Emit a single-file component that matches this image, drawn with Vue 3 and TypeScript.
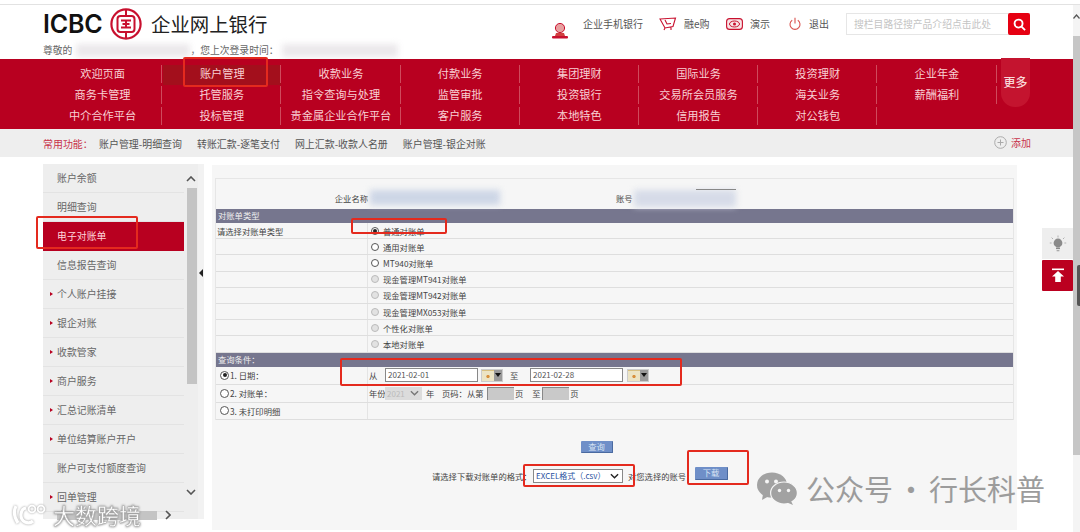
<script setup lang="ts">
const navRows: string[][] = [
  ['欢迎页面', '账户管理', '收款业务', '付款业务', '集团理财', '国际业务', '投资理财', '企业年金'],
  ['商务卡管理', '托管服务', '指令查询与处理', '监管审批', '投资银行', '交易所会员服务', '海关业务', '薪酬福利'],
  ['中介合作平台', '投标管理', '贵金属企业合作平台', '客户服务', '本地特色', '信用报告', '对公钱包', ''],
]
const navCells = navRows.flat().map((label, i) => ({ label, key: i }))
const quick = ['账户管理-明细查询', '转账汇款-逐笔支付', '网上汇款-收款人名册', '账户管理-银企对账']
const side = [
  { t: '账户余额' },
  { t: '明细查询' },
  { t: '电子对账单', active: true },
  { t: '信息报告查询' },
  { t: '个人账户挂接', arrow: true },
  { t: '银企对账', arrow: true },
  { t: '收款管家', arrow: true },
  { t: '商户服务', arrow: true },
  { t: '汇总记账清单', arrow: true },
  { t: '单位结算账户开户', arrow: true },
  { t: '账户可支付额度查询' },
  { t: '回单管理', arrow: true },
]
const types = [
  { t: '普通对账单', label: '请选择对账单类型', state: 'on' },
  { t: '通用对账单', label: '', state: 'off' },
  { t: 'MT940对账单', label: '', state: 'off' },
  { t: '现金管理MT941对账单', label: '', state: 'dis' },
  { t: '现金管理MT942对账单', label: '', state: 'dis' },
  { t: '现金管理MX053对账单', label: '', state: 'dis' },
  { t: '个性化对账单', label: '', state: 'dis' },
  { t: '本地对账单', label: '', state: 'dis' },
]
</script>

<template>
  <div class="page">
    <div class="strip"></div>
    <div class="wrap">
      <div class="content">
        <header class="head">
          <div class="brand">
            <div class="logo-row">
              <span class="icbc">ICBC</span>
              <svg class="coin" viewBox="0 0 32 32" width="32" height="32">
                <circle cx="16" cy="16" r="14.6" fill="none" stroke="#c8102e" stroke-width="2.2" />
                <rect x="7.5" y="8" width="17" height="16" rx="3" fill="none" stroke="#c8102e" stroke-width="2" />
                <path d="M16 2V8M16 24V30M11 12.4H21M11 19.6H21M16 12.4V19.6M12.5 16H19.5" fill="none" stroke="#c8102e" stroke-width="2" />
              </svg>
              <span class="title">企业网上银行</span>
            </div>
            <div class="greet">尊敬的<span class="gap-a"></span>，您上次登录时间：</div>
          </div>
          <div class="tools">
            <svg class="ti-bank" viewBox="0 0 18 16" width="18" height="16">
              <circle cx="9" cy="5" r="4.6" fill="#e8a0a0" stroke="#c8102e" stroke-width="1" />
              <path d="M5 10H13L14 13H4Z" fill="#d04040" />
              <rect x="1" y="13" width="16" height="2.6" rx="1" fill="#c8102e" />
            </svg>
            <span class="tt t-mobile">企业手机银行</span>
            <svg class="ti-cart" viewBox="0 0 18 14" width="18" height="14">
              <path d="M1 2 L16.5 1 L14 9.5 L6 11 Z M6 11 L5 13 M12 10 L12 13 M6 3 L8 7 L12 6.5" fill="none" stroke="#c8102e" stroke-width="1.1" />
            </svg>
            <span class="tt t-buy">融e购</span>
            <svg class="ti-eye" viewBox="0 0 17 12" width="17" height="12">
              <rect x="0.6" y="0.6" width="15.8" height="10.8" rx="3" fill="#f8e4e6" stroke="#c8102e" stroke-width="1.1" />
              <ellipse cx="8.5" cy="6" rx="5" ry="3" fill="none" stroke="#c8102e" stroke-width="1" />
              <circle cx="8.5" cy="6" r="1.5" fill="#c8102e" />
            </svg>
            <span class="tt t-demo">演示</span>
            <svg class="ti-power" viewBox="0 0 12 14" width="12" height="14">
              <path d="M3.2 3.2A5 5 0 1 0 8.8 3.2M6 0.8V6.5" fill="none" stroke="#d9534f" stroke-width="1.1" />
            </svg>
            <span class="tt t-exit">退出</span>
            <div class="search">
              <span class="ph">搜栏目路径搜产品介绍点击此处</span>
              <span class="search-btn">
                <svg viewBox="0 0 14 14" width="13" height="13">
                  <circle cx="6" cy="6" r="4.3" fill="none" stroke="#fff" stroke-width="2" />
                  <path d="M9.2 9.2L13 13" stroke="#fff" stroke-width="2" />
                </svg>
              </span>
            </div>
          </div>
          <div class="blur b-name"></div>
          <div class="blur b-time"></div>
        </header>

        <nav class="nav">
          <div class="nav-grid">
            <a v-for="c in navCells" :key="c.key" class="nav-cell" :class="{ 'nav-empty': !c.label, 'nav-cur': c.key === 1 }">{{ c.label }}</a>
          </div>
          <div class="more">更多</div>
          <div class="mark m-nav"></div>
        </nav>

        <div class="quick">
          <span class="quick-t">常用功能：</span>
          <a v-for="q in quick" :key="q" class="quick-i">{{ q }}</a>
          <span class="add">
            <svg viewBox="0 0 13 13" width="13" height="13">
              <circle cx="6.5" cy="6.5" r="5.8" fill="none" stroke="#aaa" />
              <path d="M3.5 6.5H9.5M6.5 3.5V9.5" stroke="#aaa" />
            </svg>
            <span>添加</span>
          </span>
        </div>

        <div class="body">
          <aside class="side">
            <div class="side-list">
              <div v-for="s in side" :key="s.t" class="side-i" :class="{ active: s.active }">
                <i v-if="s.arrow" class="tri"></i>{{ s.t }}
              </div>
              <div class="hbar">
                <svg class="ha" viewBox="0 0 6 10" width="6" height="10"><path d="M5 1L1 5L5 9" fill="none" stroke="#555" stroke-width="1.6" /></svg>
                <span class="hthumb"></span>
                <svg class="ha" viewBox="0 0 6 10" width="6" height="10"><path d="M1 1L5 5L1 9" fill="none" stroke="#555" stroke-width="1.6" /></svg>
              </div>
            </div>
            <div class="vbar">
              <svg viewBox="0 0 10 6" width="10" height="6"><path d="M1 5L5 1L9 5" fill="none" stroke="#555" stroke-width="1.6" /></svg>
              <span class="vthumb"></span>
              <svg viewBox="0 0 10 6" width="10" height="6"><path d="M1 1L5 5L9 1" fill="none" stroke="#555" stroke-width="1.6" /></svg>
            </div>
            <div class="dots"><i class="dots-tri"></i></div>
            <div class="mark m-side"></div>
            <div class="wm-side">
              <svg viewBox="0 0 36 22" width="36" height="22">
                <path d="M4 3C1.5 8 2 14 6 20M14 5C8 6 7 16 13 19C16 20.5 19 20 21 18" fill="none" stroke="#fff" stroke-width="3.2" />
                <circle cx="20" cy="6" r="3.4" fill="none" stroke="#fff" stroke-width="1.8" />
                <circle cx="29" cy="6" r="3.4" fill="none" stroke="#fff" stroke-width="1.8" />
              </svg>
              <span>大数跨境</span>
            </div>
          </aside>

          <main class="panel">
            <div class="table">
              <div class="row r-company">
                <div class="c-l right">企业名称</div>
                <div class="c-r"><span class="acct">账号</span></div>
                <div class="blur b-co"></div>
                <div class="blur b-acct"></div>
                <span class="acct-edge"></span>
              </div>
              <div class="band">对账单类型</div>
              <div v-for="ty in types" :key="ty.t" class="row r-type">
                <div class="c-l">{{ ty.label }}</div>
                <div class="c-r">
                  <i class="radio" :class="ty.state"></i><span>{{ ty.t }}</span>
                </div>
              </div>
              <div class="band">查询条件：</div>
              <div class="row r-q">
                <div class="c-l"><i class="radio on big"></i>1. 日期：</div>
                <div class="c-r">
                  <span class="from">从</span>
                  <span class="inp">2021-02-01</span>
                  <span class="cal"><i class="cal-g"></i><i class="cal-a"></i></span>
                  <span class="to">至</span>
                  <span class="inp">2021-02-28</span>
                  <span class="cal cal2"><i class="cal-g"></i><i class="cal-a"></i></span>
                </div>
              </div>
              <div class="row r-q">
                <div class="c-l"><i class="radio off big"></i>2. 对账单：</div>
                <div class="c-r">
                  <span class="from">年份</span>
                  <span class="sel-dis">2021
                    <svg viewBox="0 0 10 6" width="9" height="6"><path d="M1 1L5 5L9 1" fill="none" stroke="#777" stroke-width="1.5" /></svg>
                  </span>
                  <span class="y">年</span>
                  <span class="pg">页码：从第</span>
                  <span class="inp-dis"></span>
                  <span>页</span>
                  <span class="t2">至</span>
                  <span class="inp-dis"></span>
                  <span>页</span>
                </div>
              </div>
              <div class="row r-q">
                <div class="c-l"><i class="radio off big"></i>3. 未打印明细</div>
                <div class="c-r"></div>
              </div>
            </div>

            <div class="q-row"><span class="btn">查询</span></div>
            <div class="f-row">
              <span>请选择下载对账单的格式：</span>
              <span class="fsel">
                <span>EXCEL格式（.csv）</span>
                <svg viewBox="0 0 10 6" width="9" height="6"><path d="M1 1L5 5L9 1" fill="none" stroke="#222" stroke-width="1.5" /></svg>
              </span>
              <span class="f-acc">对您选择的账号：</span>
              <span class="btn btn-d">下载</span>
            </div>

            <div class="mark m-type"></div>
            <div class="mark m-date"></div>
            <div class="mark m-fmt"></div>
            <div class="mark m-dl"></div>
          </main>

          <div class="rail">
            <div class="lamp">
              <svg viewBox="0 0 18 18" width="18" height="18">
                <circle cx="9" cy="8" r="4.4" fill="#8a8a8a" />
                <rect x="7" y="12.5" width="4" height="1.6" fill="#8a8a8a" />
                <rect x="7.6" y="15" width="2.8" height="1.3" fill="#aaa" />
                <path d="M9 0.5V2.5M2.6 2.6L4 4M15.4 2.6L14 4M0.8 8H2.6M15.4 8H17.2" stroke="#aaa" stroke-width="0.9" />
              </svg>
            </div>
            <div class="totop">
              <svg viewBox="0 0 14 15" width="14" height="15">
                <rect x="1" y="0.5" width="12" height="1.6" fill="#fff" />
                <path d="M7 3L13 8.4H9.8V14H4.2V8.4H1Z" fill="#fff" />
              </svg>
            </div>
          </div>
        </div>
      </div>
      <div class="pagebar">
        <svg class="pb-up" viewBox="0 0 7 5" width="7" height="5"><path d="M0.5 4.5L3.5 1L6.5 4.5" fill="none" stroke="#555" stroke-width="1.2" /></svg>
        <span class="pb-thumb"><i class="pb-dark"></i></span>
      </div>
    </div>

    <div class="wm">
      <svg viewBox="0 0 40 33" width="40" height="33">
        <ellipse cx="15" cy="13" rx="15" ry="12.6" fill="#a2a2a2" />
        <path d="M6 22L5 28L12 24Z" fill="#a2a2a2" />
        <ellipse cx="27" cy="21" rx="13.4" ry="11" fill="#a2a2a2" stroke="#f6f6f6" stroke-width="1.2" />
        <path d="M34 29L36 33L29 30Z" fill="#a2a2a2" />
        <circle cx="10" cy="9.5" r="2" fill="#f6f6f6" />
        <circle cx="19" cy="9.5" r="2" fill="#f6f6f6" />
        <circle cx="22.5" cy="18.5" r="1.7" fill="#f6f6f6" />
        <circle cx="31.5" cy="18.5" r="1.7" fill="#f6f6f6" />
      </svg>
      <span class="wm-a">公众号</span>
      <span class="wm-dot">·</span>
      <span>行长科普</span>
    </div>
  </div>
</template>

<style>
html, body { margin: 0; background: #fff; }
</style>

<style scoped>
.page {
  position: relative;
  width: 1080px;
  height: 532px;
  overflow: hidden;
  background: #fff;
  font-family: "Noto Sans CJK SC", "Liberation Sans", sans-serif;
  color: #555;
}
.strip { height: 4px; border-bottom: 1px solid #e2e2e2; }
.wrap { display: flex; height: 527px; }
.content { width: 1073px; flex: none; display: flex; flex-direction: column; }

.head { position: relative; height: 54px; flex: none; display: flex; justify-content: space-between; padding: 0 43px; }
.logo-row { display: flex; align-items: center; height: 38px; }
.icbc { font: 600 25px Inter, "Liberation Sans", sans-serif; color: #111; letter-spacing: -0.2px; width: 59px; }
.coin { margin-left: 8px; }
.title { margin-left: 9px; font-size: 19.4px; color: #222; line-height: 38px; }
.greet { font-size: 9.8px; line-height: 14px; color: #666; }
.gap-a { display: inline-block; width: 118px; }
.tools { display: flex; align-items: center; height: 22px; margin-top: 8px; }
.tt { font-size: 10px; color: #555; white-space: nowrap; line-height: 22px; }
.ti-bank { margin-top: 13px; margin-right: 14px; margin-left: 2px; }
.t-mobile { width: 60px; margin-right: 16px; }
.ti-cart { margin-right: 7px; }
.t-buy { width: 25px; margin-right: 17px; }
.ti-eye { margin-right: 7px; }
.t-demo { width: 20px; margin-right: 19px; }
.ti-power { margin-right: 8px; }
.t-exit { width: 20px; margin-right: 17px; }
.search { display: flex; width: 184px; height: 22px; box-sizing: border-box; border: 1px solid #e6e6e6; border-right: 0; }
.ph { flex: 1; font-size: 9.8px; line-height: 20px; color: #c4c4c4; padding-left: 7px; white-space: nowrap; overflow: hidden; }
.search-btn { width: 22px; height: 22px; margin-top: -1px; background: #e60012; border-radius: 2px; display: flex; align-items: center; justify-content: center; }
.blur { position: absolute; filter: blur(3px); }
.b-name { left: 76px; top: 39px; width: 114px; height: 13px; background: #ebe8eb; }
.b-time { left: 282px; top: 39px; width: 116px; height: 13px; background: #ebe8eb; }

.nav { position: relative; height: 70px; flex: none; background: #b80020; padding: 6px 0 0 43px; box-sizing: border-box; }
.nav-grid { display: grid; grid-template-columns: repeat(8, 119.2px); grid-auto-rows: 21px; }
.nav-cell { position: relative; font-size: 11.2px; line-height: 17px; text-align: center; color: #f8d0d4; white-space: nowrap; }
.nav-cell::after { content: ""; position: absolute; right: 0; top: 0; height: 18px; width: 1px; background: #cf4a5c; }
.nav-empty::after { display: none; }
.nav-cur { background: #a30f1c; height: 20px; margin-left: 1px; }
.more { position: absolute; left: 1001px; top: -1px; width: 29px; height: 49px; background: #c4142f; border-radius: 0 0 14px 14px; font-size: 12px; font-weight: 500; line-height: 47px; text-align: center; color: #f8d8d8; }
.mark { position: absolute; border: 2px solid #e42a1e; border-radius: 2px; box-sizing: border-box; pointer-events: none; }
.m-nav { left: 183px; top: -2px; width: 85px; height: 30px; }

.quick { height: 28px; flex: none; background: #eeeeee; display: flex; align-items: center; padding-left: 43px; font-size: 9.95px; position: relative; }
.quick-t { color: #c8324a; width: 56px; }
.quick-i { color: #555; white-space: nowrap; margin-right: 15px; }
.add { position: absolute; left: 994px; top: 6px; display: flex; align-items: center; gap: 4px; color: #c8324a; }

.body { flex: 1; display: flex; min-height: 0; }
.side { position: relative; width: 161px; margin: 7px 0 0 43px; height: 355px; display: flex; flex: none; }
.side-list { width: 141px; height: 355px; background: #eee; position: relative; }
.side-i { position: relative; height: 29px; box-sizing: border-box; border-bottom: 1px solid #e3e3e3; line-height: 28px; padding-left: 14px; font-size: 9.9px; color: #666; white-space: nowrap; }
.side-i.active { background: #b80020; color: #ffd6dc; border-bottom-color: #b80020; }
.tri { position: absolute; left: 7px; top: 12px; border-left: 3px solid #b80020; border-top: 2.5px solid transparent; border-bottom: 2.5px solid transparent; }
.hbar { position: absolute; left: 0; right: 0; top: 345px; height: 12px; display: flex; align-items: center; padding-left: 14px; width: 114px; }
.ha { flex: none; }
.hthumb { width: 104px; height: 9px; background: #c4c4c4; margin: 0 8px 0 -6px; }
.vbar { width: 14px; background: #eee; display: flex; flex-direction: column; align-items: center; padding-top: 12px; box-sizing: border-box; }
.vthumb { width: 10px; height: 196px; background: #c4c4c4; margin: 6px 0 105px 2px; }
.dots { position: relative; width: 6px; background-color: #f2f2f2; background-image: radial-gradient(#9a9a9a 0.6px, transparent 0.7px); background-size: 2px 2px; }
.dots-tri { position: absolute; left: 1px; top: 105px; border-right: 4px solid #222; border-top: 4px solid transparent; border-bottom: 4px solid transparent; }
.m-side { left: -7px; top: 52px; width: 102px; height: 33px; }
.wm-side { position: absolute; left: -31px; top: 339px; display: flex; align-items: center; gap: 5px; font-size: 22px; line-height: 20px; color: #fff; -webkit-text-stroke: 0.4px #aaa; text-shadow: 0 0 2px #999; white-space: nowrap; filter: drop-shadow(0 0 1px #999); }

.panel { position: relative; width: 805px; flex: none; margin: 8px 0 2px 8px; padding: 13px 3px 0; box-sizing: border-box; background: #f6f6f6; font-size: 8.3px; color: #444; height: 365px; }
.table { border: 1px solid #e6e6e6; border-bottom: 0; width: 799px; box-sizing: border-box; margin-top: 0; }
.row { position: relative; display: flex; border-bottom: 1px solid #dedede; }
.c-l { width: 152px; flex: none; box-sizing: border-box; padding-left: 1px; border-right: 1px solid #e4e4e4; display: flex; align-items: center; }
.c-r { flex: 1; display: flex; align-items: center; white-space: nowrap; }
.r-company { height: 30px; border-bottom: 0; align-items: center; padding-top: 8px; box-sizing: border-box; }
.r-company .c-l, .r-company .c-r { border: 0; }
.right { justify-content: flex-end; }
.acct { margin-left: 248px; }
.b-co { left: 154px; top: 11px; width: 130px; height: 15px; background: #cdd6e6; }
.b-acct { left: 418px; top: 11px; width: 102px; height: 17px; background: #d6dbe8; }
.acct-edge { position: absolute; left: 480px; top: 10px; width: 40px; height: 1px; background: #888; }
.band { height: 14px; line-height: 13px; background: #76768e; color: #f0f0f0; padding-left: 2px; font-size: 8.3px; }
.r-type { height: 16.2px; box-sizing: border-box; }
.radio { display: inline-block; flex: none; width: 8px; height: 8px; border-radius: 50%; box-sizing: border-box; background: #fff; border: 1px solid #555; margin: 0 4px 0 3px; position: relative; }
.radio.on::after { content: ""; position: absolute; left: 1px; top: 1px; width: 4px; height: 4px; border-radius: 50%; background: #222; }
.radio.dis { border-color: #bbb; background: #e2e2e2; }
.radio.big { width: 9px; height: 9px; margin: 0 1px 0 3px; }
.radio.big.on::after { left: 1.5px; top: 1.5px; }
.r-q { height: 18px; box-sizing: border-box; }
.r-q:last-child { height: 17px; }
.from { margin-left: 1px; width: 16px; }
.inp { width: 93px; height: 14px; box-sizing: border-box; border: 1px solid #888; background: #fff; font-size: 8px; line-height: 12px; padding-left: 2px; color: #555; }
.cal { width: 22px; height: 13px; margin-left: 3px; display: flex; background: #ddd; border: 1px solid #ccc; box-sizing: border-box; }
.cal-g { flex: 1; background: radial-gradient(circle at 50% 55%, #d8903c 0 1.3px, #ece4c4 2px); border-top: 1px solid #d8c080; }
.cal-a { width: 8px; background: #9a9a9a; position: relative; }
.cal-a::after { content: ""; position: absolute; left: 1px; top: 3px; border-top: 4px solid #111; border-left: 3px solid transparent; border-right: 3px solid transparent; }
.to { margin-left: 7px; width: 20px; }
.cal2 { margin-left: 4px; }
.sel-dis { width: 37px; height: 13px; background: #dcdcdc; color: #bbb; font-size: 8px; display: flex; align-items: center; justify-content: space-between; padding: 0 3px 0 2px; box-sizing: border-box; }
.y { margin: 0 0 0 4px; width: 16px; }
.pg { width: 45px; }
.inp-dis { width: 27px; height: 13px; background: #c9c9c9; border-top: 1px solid #888; border-left: 1px solid #888; box-sizing: border-box; margin-right: 1px; }
.t2 { margin-left: 9px; width: 10px; }

.q-row { padding-left: 366px; margin-top: 21px; height: 12px; display: flex; }
.btn { width: 32px; height: 12px; line-height: 11px; text-align: center; color: #d8e4f4; background: #6f8fc8; border-right: 1px solid #4a6aa0; border-bottom: 1px solid #4a6aa0; box-sizing: border-box; border-radius: 1px; }
.f-row { display: flex; align-items: center; padding-left: 217px; margin-top: 16px; height: 14px; white-space: nowrap; }
.f-row > span:first-child { width: 101px; }
.fsel { width: 90px; height: 14px; border: 1px solid #888; background: #fff; box-sizing: border-box; color: #2850a0; display: flex; align-items: center; justify-content: space-between; padding: 0 3px 0 2px; font-size: 8px; }
.f-acc { margin-left: 5px; width: 67px; }
.btn-d { width: 33px; height: 13px; margin-top: -4px; }

.m-type { left: 139px; top: 53px; width: 96px; height: 16px; }
.m-date { left: 128px; top: 193px; width: 342px; height: 28px; }
.m-fmt { left: 311px; top: 299px; width: 112px; height: 23px; }
.m-dl { left: 475px; top: 285px; width: 62px; height: 35px; }

.rail { margin: 71px 0 0 25px; width: 31px; display: flex; flex-direction: column; }
.lamp { height: 31px; background: #eee; display: flex; align-items: center; justify-content: center; }
.totop { height: 31px; margin-top: 1px; background: #bb0020; border-radius: 1px; display: flex; align-items: center; justify-content: center; }

.pagebar { width: 7px; flex: none; position: relative; background: #f4f4f4; }
.pb-up { position: absolute; left: 0; top: 9px; }
.pb-thumb { position: absolute; left: 0; top: 31px; width: 7px; height: 419px; background: #c6c6c6; }
.pb-dark { position: absolute; left: 4px; top: 229px; width: 3px; height: 41px; background: #555; border-radius: 2px 0 0 2px; }

.wm { position: absolute; left: 757px; top: 471px; display: flex; align-items: center; color: #9c9c9c; font-size: 29px; line-height: 34px; white-space: nowrap; }
.wm-a { margin-left: 9px; }
.wm-dot { width: 36px; text-align: center; }
</style>
